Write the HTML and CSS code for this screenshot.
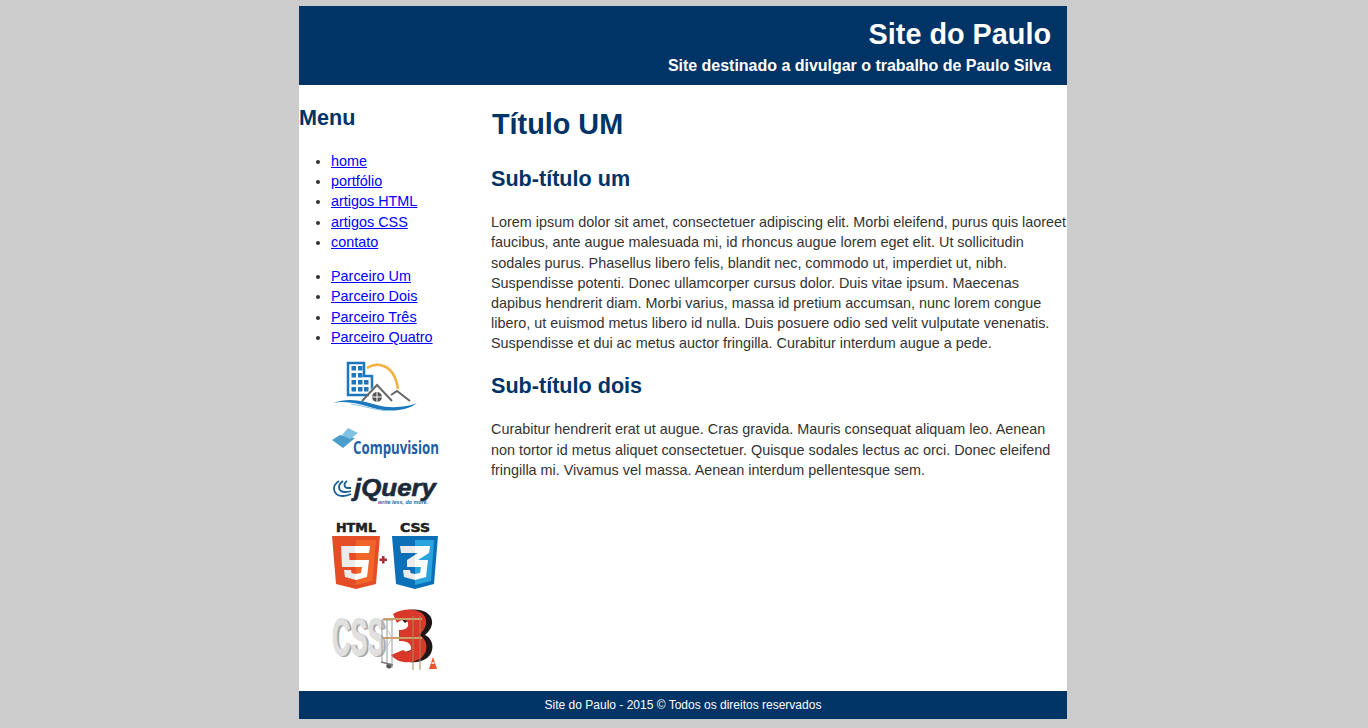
FILE: index.html
```html
<!DOCTYPE html>
<html lang="pt">
<head>
<meta charset="utf-8">
<title>Site do Paulo</title>
<link rel="stylesheet" href="styles.css">
</head>
<body>
<div class="page">
  <header class="topo">
    <h1>Site do Paulo</h1>
    <h2>Site destinado a divulgar o trabalho de Paulo Silva</h2>
  </header>
  <div class="colunas">
    <aside class="lateral">
      <h2>Menu</h2>
      <ul class="lista">
        <li><a href="#">home</a></li>
        <li><a href="#">portfólio</a></li>
        <li><a href="#">artigos HTML</a></li>
        <li><a href="#">artigos CSS</a></li>
        <li><a href="#">contato</a></li>
      </ul>
      <ul class="lista segunda">
        <li><a href="#">Parceiro Um</a></li>
        <li><a href="#">Parceiro Dois</a></li>
        <li><a href="#">Parceiro Três</a></li>
        <li><a href="#">Parceiro Quatro</a></li>
      </ul>
      <div class="logos">
        <svg class="logo l1" viewBox="0 0 108 50" width="108" height="50" aria-label="Construtora">
          <path d="M36 7 C46 1 63 2 67 28" fill="none" stroke="#f6b042" stroke-width="2.500"/>
          <path d="M17 2H33V15H41V34H17Z" fill="#fff" stroke="#1b78be" stroke-width="2.500"/>
          <g fill="#1b78be">
            <rect x="20.500" y="5" width="4.500" height="4.500"/><rect x="27" y="5" width="4.500" height="4.500"/>
            <rect x="20.500" y="12" width="4.500" height="4.500"/><rect x="27" y="12" width="4.500" height="4.500"/>
            <rect x="20.500" y="19" width="4.500" height="4.500"/><rect x="27" y="19" width="4.500" height="4.500"/><rect x="33" y="19" width="4.500" height="4.500"/>
            <rect x="20.500" y="26" width="4.500" height="4.500"/><rect x="27" y="26" width="4.500" height="4.500"/><rect x="33" y="26" width="4.500" height="4.500"/>
          </g>
          <path d="M38 30 L46 23 L60 32 L60 42 H38Z" fill="#fff"/>
          <path d="M31 40 L46 24 L61 40 M60 34 L66 30 L79 40" fill="none" stroke="#666" stroke-width="2"/>
          <circle cx="46" cy="36" r="5" fill="#555"/>
          <path d="M46 31v10M41 36h10" stroke="#fff" stroke-width="1"/>
          <path d="M2 42 C18 36 32 40 46 44 C60 48 76 46 86 42 C76 50 60 51 46 48 C30 44 18 39 2 42Z" fill="#1b78be"/>
          <path d="M20 43 C34 45 46 50 62 50" fill="none" stroke="#8cc3e6" stroke-width="1"/>
        </svg>
        <svg class="logo l2" viewBox="0 0 108 32" width="108" height="32" aria-label="Compuvision">
          <path d="M1 12 L9 7 L24 10 L12 20Z" fill="#4a9ccb"/>
          <path d="M11 7 L17 0 L27 5 L19 11Z" fill="#7fc1e3"/>
          <text class="t-compu" transform="translate(22 26) scale(.78 1)">Compuvision</text>
        </svg>
        <svg class="logo l3" viewBox="0 0 108 30" width="108" height="30" aria-label="jQuery">
          <g fill="none" stroke="#1b5e96" stroke-width="1.800">
            <path d="M8 5 C0 10 2 20 12 20 C15 20 18 19 20 18"/>
            <path d="M12 5 C6 9 7 16 14 16 C16 16 18 16 20 15"/>
            <path d="M16 5 C12 8 13 12 17 12 C18 12 19 12 20 12"/>
          </g>
          <text x="23" y="20" class="t-jq" textLength="82" lengthAdjust="spacingAndGlyphs">jQuery</text>
          <text x="47" y="28" class="t-jq2" textLength="50" lengthAdjust="spacingAndGlyphs">write less, do more.</text>
        </svg>
        <svg class="logo l4" viewBox="0 0 108 70" width="108" height="70" aria-label="HTML5 + CSS3">
          <defs>
            <linearGradient id="meia5" x1="0" x2="1" y1="0" y2="0">
              <stop offset=".5" stop-color="#ebebeb"/><stop offset=".5" stop-color="#fff"/>
            </linearGradient>
          </defs>
          <text x="5" y="11" class="t-bad" textLength="40" lengthAdjust="spacingAndGlyphs">HTML</text>
          <text x="69" y="11" class="t-bad" textLength="30" lengthAdjust="spacingAndGlyphs">CSS</text>
          <path d="M1 15H49L45 63 25 68 5 63Z" fill="#e44d26"/>
          <path d="M25 19H45L41.500 60 25 64Z" fill="#f16529"/>
          <path d="M10 25H39L38 32H18L18.500 39H38L36 56 25 59 14 56 13 49H20L20.500 52 25 53 30 52 31 46H11Z" fill="url(#meia5)"/>
          <path d="M51 35h2.500v2.500H56v2.500h-2.500v2.500H51V40h-2.500v-2.500H51Z" fill="#a0343a"/>
          <path d="M61 15H107L103 63 84 68 65 63Z" fill="#0c70b8"/>
          <path d="M84 19H103L100 60 84 64Z" fill="#29a4df"/>
          <path d="M69 25H99L98 32 87 39H97L95 56 84 59 73 56 72 49H79L79.500 52 84 53 89 52 90 46H76V39L87 32H70Z" fill="url(#meia5)"/>
        </svg>
        <svg class="logo l5" viewBox="0 0 108 64" width="108" height="64" aria-label="CSS3 em obras">
          <text class="t-css t-css-s" transform="translate(3 48) scale(.49 1)">CSS</text>
          <text class="t-css" transform="translate(1 47) scale(.49 1)">CSS</text>
          <path d="M66 6 C78 -2 103 0 101 16 C100 22 96 25 94 27 C103 31 104 44 96 50 C86 57 72 55 66 47 L80 42 C84 45 88 44 88 40 C88 34 82 33 76 33 V22 C82 22 86 20 85 15 C84 11 78 11 74 15Z" fill="#1f1616"/>
          <path d="M62 6 C74 -2 97 0 95 16 C94 22 90 25 88 27 C97 31 98 44 90 50 C80 57 66 55 60 47 L72 42 C76 45 80 44 80 40 C80 34 74 33 68 33 V22 C74 22 78 20 77 15 C76 11 70 11 66 15Z" fill="#d8392b"/>
          <path d="M51 12H62M51 30H62M51 12V55M56 12V60M61 12V60" fill="none" stroke="#999" stroke-width="1"/>
          <path d="M51 12L61 30M61 30L51 48" fill="none" stroke="#bbb" stroke-width=".8"/>
          <path d="M52 11H91M52 30H91" fill="none" stroke="#c8a26a" stroke-width="2"/>
          <path d="M82 8V62M89 8V62" fill="none" stroke="#a98a5a" stroke-width="1"/>
          <circle cx="58" cy="58" r="2.500" fill="#555"/>
          <path d="M50 54L62 57" stroke="#777" stroke-width="1.500"/>
          <path d="M102 49L106 61H98Z" fill="#e8562a"/>
          <path d="M100.500 55h3" stroke="#fff" stroke-width="1.500"/>
        </svg>
      </div>
    </aside>
    <main class="conteudo">
      <h1>Título UM</h1>
      <h2 class="sub-um">Sub-título um</h2>
      <p>Lorem ipsum dolor sit amet, consectetuer adipiscing elit. Morbi eleifend, purus quis laoreet faucibus, ante augue malesuada mi, id rhoncus augue lorem eget elit. Ut sollicitudin sodales purus. Phasellus libero felis, blandit nec, commodo ut, imperdiet ut, nibh. Suspendisse potenti. Donec ullamcorper cursus dolor. Duis vitae ipsum. Maecenas dapibus hendrerit diam. Morbi varius, massa id pretium accumsan, nunc lorem congue libero, ut euismod metus libero id nulla. Duis posuere odio sed velit vulputate venenatis. Suspendisse et dui ac metus auctor fringilla. Curabitur interdum augue a pede.</p>
      <h2 class="sub-dois">Sub-título dois</h2>
      <p>Curabitur hendrerit erat ut augue. Cras gravida. Mauris consequat aliquam leo. Aenean non tortor id metus aliquet consectetuer. Quisque sodales lectus ac orci. Donec eleifend fringilla mi. Vivamus vel massa. Aenean interdum pellentesque sem.</p>
    </main>
  </div>
  <footer class="rodape">Site do Paulo - 2015 © Todos os direitos reservados</footer>
</div>
</body>
</html>
```
FILE: styles.css
```css
html, body { margin: 0; padding: 0; }
body {
  background: #ccc;
  font-family: "Liberation Sans", Arial, sans-serif;
  font-size: 14.4px;
  line-height: 1.4;
  color: #333;
  padding: 6px 2px 9px 0;
}
.page { width: 768px; margin: 0 auto; background: #fff; }
.topo {
  background: #036;
  color: #fff;
  height: 79px;
  box-sizing: border-box;
  padding: 12px 16px 0 0;
  text-align: right;
}
.topo h1 { margin: 0; font-size: 28.8px; line-height: 33px; }
.topo h2 { margin: 4px 0 0; font-size: 16px; line-height: 22px; letter-spacing: -.02px; }
.colunas { display: flex; height: 606px; }
.lateral { width: 192px; flex: none; }
.lateral h2 { margin: 19px 0 0; font-size: 21.6px; line-height: 27px; color: #036; }
.lista { margin: 20.1px 0 0; padding: 0 0 0 32px; }
.lista.segunda { margin-top: 14.4px; }
.lista a { color: #00f; }
.logos { display: flex; flex-direction: column; padding: 14px 0 0 32px; }
.logo { display: block; }
.l1 { margin-bottom: 17px; }
.l2 { margin-bottom: 16px; }
.l3 { margin-bottom: 15px; }
.l4 { margin-bottom: 17px; }
.conteudo { flex: 1; min-width: 0; }
.conteudo h1 { margin: 19px 0 0 1px; font-size: 28.8px; line-height: 40px; color: #036; }
.conteudo h2 { margin: 20px 0 0; font-size: 21.6px; line-height: 30px; color: #036; }
.conteudo .sub-dois { margin-top: 18px; }
.conteudo p { margin: 18.2px 0 0; }
.rodape {
  background: #036;
  color: #fff;
  height: 28px;
  line-height: 29px;
  font-size: 12px;
  text-align: center;
}
.t-compu { font: bold 17px "Open Sans", sans-serif; fill: #1d5ea6; }
.t-jq { font: italic bold 24px "Liberation Sans", sans-serif; fill: #1b2a3a; stroke: #1b2a3a; stroke-width: .6px; }
.t-jq2 { font: italic bold 6px "Liberation Sans", sans-serif; fill: #1b6aa5; }
.t-bad { font: bold 12px "DejaVu Sans", sans-serif; fill: #222; stroke: #222; stroke-width: .5px; }
.t-css { font: bold 52px "Liberation Sans", sans-serif; fill: #e0e0e0; stroke: #e0e0e0; stroke-width: 1px; }
.t-css-s { fill: #a8a8a8; stroke: #a8a8a8; }
```
